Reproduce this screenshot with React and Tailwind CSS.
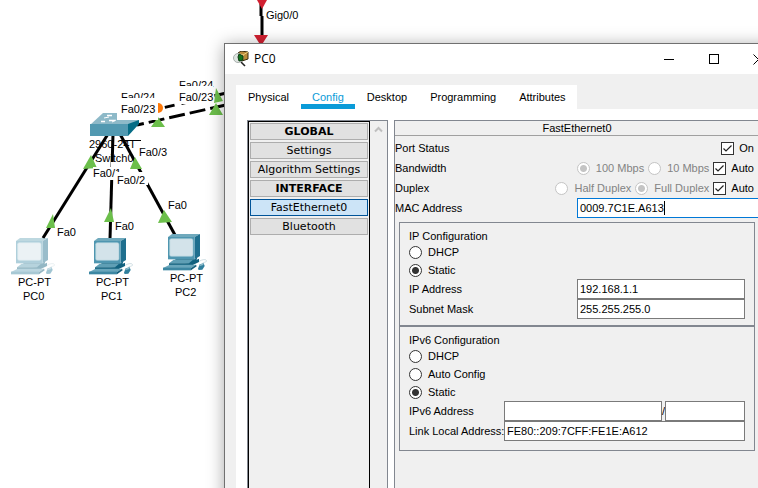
import { useId } from "react";

const NODE_LABELS = [
  { x: 18, y: 286, text: "PC-PT" },
  { x: 23, y: 300, text: "PC0" },
  { x: 96, y: 286, text: "PC-PT" },
  { x: 101, y: 300, text: "PC1" },
  { x: 170, y: 282, text: "PC-PT" },
  { x: 175, y: 296, text: "PC2" },
  { x: 57, y: 236, text: "Fa0" },
  { x: 115, y: 230, text: "Fa0" },
  { x: 168, y: 209, text: "Fa0" },
  { x: 139, y: 156, text: "Fa0/3" },
  { x: 266, y: 19, text: "Gig0/0" },
];

function Computer({ x, y, faded }) {
  return (
    <svg x={x} y={y} width="44" height="37" viewBox="0 0 132 111" opacity={faded ? 0.45 : 1}>
      <polygon points="15,9 27,0 111,0 95,9" fill="#6fa9bc" />
      <polygon points="95,9 111,0 111,66 95,76" fill="#1f6f8e" />
      <rect x="15" y="9" width="80" height="67" fill="#4f96b0" />
      <rect x="20" y="14" width="70" height="53" rx="5" fill="#d3e3ea" stroke="#a5cad6" strokeWidth="2" />
      <polygon points="37,76 95,76 103,70 100,81 86,89 37,84" fill="#136583" />
      <polygon points="18,88 32,77 90,77 78,88" fill="#5f9fb5" />
      <polygon points="18,88 78,88 108,74 108,84 88,94 18,94" fill="#12617e" />
      <polygon points="0,102 20,92 99,92 84,102" fill="#69a6bb" />
      <polygon points="0,101 84,101 84,109 0,109" fill="#3d87a2" />
      <polygon points="84,102 99,92 101,97 84,109" fill="#155f7b" />
      <path d="M108 82 C122 74 132 76 130 82 C129 86 120 84 118 88" fill="none" stroke="#b9ced7" strokeWidth="2" />
      <path d="M105 104 L110 91 L122 88 L125 96 L118 107 L107 108 Z" fill="#2f7f9d" />
      <path d="M108 97 L112 91 L122 88 L121 93 Z" fill="#8fbccb" />
    </svg>
  );
}

function Topology() {
  return (
    <svg
      className="absolute left-0 top-0 font-['Liberation_Sans',Arial,sans-serif] text-[11px]"
      width="758"
      height="488"
      viewBox="0 0 758 488"
      role="img"
      aria-label="Network topology"
    >
      <g fill="#000">
        <text x="89" y="148">2960-24T</text>
        <text x="95" y="162">Switch0</text>
      </g>
      <g stroke="#000" strokeWidth="3" fill="none">
        <path d="M108 134 L43 238" />
        <path d="M113 134 L110 239" />
        <path d="M120 134 L175 235" />
        <path d="M261 4 V16 M262 16 V38" />
        <path d="M137 125 L226 105" strokeDasharray="16 5" strokeDashoffset="9" />
        <path d="M158 109 L226 93" strokeDasharray="10 7" strokeDashoffset="10" />
        <path d="M120 140.500 H141" strokeWidth="1" />
      </g>
      <circle cx="158" cy="108" r="5" fill="#ff7a0a" />
      <g fill="#6cbf4b">
        <polygon points="158,117 165,127 151,127" />
        <polygon points="216,88 223,101 214,103" />
        <polygon points="216,103 223,115 209,115" />
        <polygon points="91,155 97,168 83,169" />
        <polygon points="135,157 142,169 130,169" />
        <polygon points="53,214 55,228 46,228" />
        <polygon points="111,208 114,222 104,222" />
        <polygon points="164,210 172,222 158,223" />
      </g>
      <polygon points="257,0 267,0 262,9" fill="#d12031" />
      <polygon points="254,35 268,35 261,46" fill="#d12031" />

      <polygon points="90,125 103,113 139,113 139,121 128,125" fill="#8db9c8" />
      <polygon points="90,124 128,124 128,136 90,136" fill="#5299b1" />
      <polygon points="128,124 139,120 139,124 128,136" fill="#066d86" />
      <g stroke="#fff" strokeWidth="1.500" fill="none">
        <path d="M107 115.500 h5 M101 121.500 h4 M109 120.500 h6" />
        <path d="M104 118 l5 -1 M112 122 l4 -2" strokeWidth="1" />
      </g>

      <g fill="#fff">
        <rect x="177" y="80" width="36" height="11" />
        <rect x="119" y="92" width="36" height="10" />
      </g>
      <text x="179" y="89">Fa0/24</text>
      <text x="121" y="101">Fa0/24</text>
      <g fill="#fff">
        <rect x="177" y="86" width="36" height="18" />
        <rect x="117" y="98" width="41" height="22" />
        <rect x="93" y="167" width="22" height="13" />
      </g>
      <text x="179" y="101">Fa0/23</text>
      <text x="121" y="113">Fa0/23</text>
      <text x="93" y="177">Fa0/1</text>
      <rect x="111" y="162" width="4" height="5" fill="#fff" />
      <rect x="115" y="172" width="33" height="13" fill="#fff" />
      <text x="117" y="184">Fa0/2</text>

      <Computer x={11} y={238} faded />
      <Computer x={89} y={238} />
      <Computer x={163} y={234} />
      {NODE_LABELS.map((l) => (
        <text key={`${l.x}-${l.y}`} x={l.x} y={l.y}>
          {l.text}
        </text>
      ))}
    </svg>
  );
}

function Radio({ name, label, checked, disabled }) {
  return (
    <label className={`flex items-center gap-[6px] ${disabled ? "text-[#838383]" : "text-black"}`}>
      <input
        type="radio"
        name={name}
        defaultChecked={checked}
        disabled={disabled}
        className="size-[13px] appearance-none rounded-full border border-[#333] bg-white checked:bg-[radial-gradient(circle,#333_0_3px,#fff_4px)] disabled:border-[#c4c4c4] disabled:checked:bg-[radial-gradient(circle,#c4c4c4_0_3px,#fff_4px)]"
      />
      {label}
    </label>
  );
}

function CheckBox({ label }) {
  return (
    <label className="flex items-center gap-[5px]">
      <span className="grid">
        <input
          type="checkbox"
          defaultChecked
          className="col-start-1 row-start-1 size-[13px] appearance-none border border-[#333] bg-white"
        />
        <svg className="pointer-events-none col-start-1 row-start-1" width="13" height="13" viewBox="0 0 13 13" fill="none" stroke="#222" strokeWidth="1.200">
          <path d="M2.500 6.500 L5 9 L10.500 3.500" />
        </svg>
      </span>
      {label}
    </label>
  );
}

const field = "h-5 min-w-0 border border-[#7a7a7a] bg-white px-[2px] outline-none";

function TextRow({ label, value, wide }) {
  const id = useId();
  return (
    <div className="flex h-5 items-center">
      <label htmlFor={id} className={wide ? "w-[95px] shrink-0 whitespace-nowrap" : "w-[168px] shrink-0"}>
        {label}
      </label>
      <input id={id} defaultValue={value} className={`${field} flex-1`} />
    </div>
  );
}

const TABS = ["Physical", "Config", "Desktop", "Programming", "Attributes"];
const MENU = [
  { text: "GLOBAL", heading: true },
  { text: "Settings" },
  { text: "Algorithm Settings" },
  { text: "INTERFACE", heading: true },
  { text: "FastEthernet0", active: true },
  { text: "Bluetooth" },
];

function TitleBar() {
  return (
    <header className="flex h-[30px] items-center bg-white pl-2 pr-px">
      <svg width="16" height="16" viewBox="0 0 16 16" aria-hidden="true">
        <polygon points="5,2 8,0 15,1 15,8 9,10 5,8" fill="#b98a3c" stroke="#3a2d10" />
        <path d="M6 3 L10 4 L15 1 M10 4 V9" stroke="#f1d27c" fill="none" />
        <circle cx="5" cy="7" r="4.500" fill="#dfe5e2" stroke="#a9b0ad" />
        <path d="M6 3 L10 5 V9 L6 10 L5 6 Z" fill="#14751f" stroke="#0b3a10" />
        <path d="M8 11 L12 15" stroke="#222" strokeWidth="1.600" />
      </svg>
      <h1 className="ml-[5px] flex-1 font-['Open_Sans','Noto_Sans',sans-serif] text-[12px]">PC0</h1>
      <button aria-label="Minimize" className="flex h-full w-[45px] items-center justify-center">
        <span className="h-px w-[10px] bg-black" />
      </button>
      <button aria-label="Maximize" className="flex h-full w-[45px] items-center justify-center">
        <span className="size-[10px] border border-black" />
      </button>
      <button aria-label="Close" className="flex h-full w-[45px] items-center justify-center">
        <svg width="11" height="11" viewBox="0 0 11 11" stroke="#000">
          <path d="M0.500 0.500 L10.500 10.500 M10.500 0.500 L0.500 10.500" />
        </svg>
      </button>
    </header>
  );
}

function Sidebar() {
  return (
    <aside className="flex w-[141px] shrink-0 border border-[#828790] bg-[#f0f0f0]">
      <nav className="flex flex-1 flex-col gap-[2px] border border-black p-px font-['DejaVu_Sans',Verdana,sans-serif] text-[11px]">
        {MENU.map((m) => (
          <button
            key={m.text}
            className={`h-[17px] whitespace-nowrap border pt-px leading-[14px] ${m.heading ? "font-bold" : ""} ${
              m.active ? "border-[#005499] bg-[#cce4f7]" : "border-[#adadad] bg-[#e1e1e1]"
            }`}
          >
            {m.text}
          </button>
        ))}
      </nav>
      <div className="flex w-[17px] justify-center pt-[5px]">
        <svg width="9" height="7" viewBox="0 0 9 7" fill="none" stroke="#bfbfbf" strokeWidth="2">
          <path d="M1 5.500 L4.500 2 L8 5.500" />
        </svg>
      </div>
    </aside>
  );
}

function InterfacePanel() {
  return (
    <section className="min-w-0 flex-1 border border-[#828790] bg-[#f0f0f0]">
      <h2 className="h-[15px] border-b border-[#a0a0a0] text-center leading-[14px]">FastEthernet0</h2>
      <div className="pt-[2px]">
        <div className="flex h-5 items-center justify-between pr-[5px]">
          <span>Port Status</span>
          <CheckBox label="On" />
        </div>
        <div className="flex h-5 items-center gap-1 pr-[5px]">
          <span className="flex-1">Bandwidth</span>
          <Radio name="bandwidth" label="100 Mbps" checked disabled />
          <Radio name="bandwidth" label="10 Mbps" disabled />
          <CheckBox label="Auto" />
        </div>
        <div className="flex h-5 items-center gap-1 pr-[5px]">
          <span className="flex-1">Duplex</span>
          <Radio name="duplex" label="Half Duplex" disabled />
          <Radio name="duplex" label="Full Duplex" checked disabled />
          <CheckBox label="Auto" />
        </div>
        <div className="flex h-5 items-center">
          <label htmlFor="mac" className="w-[182px] shrink-0">
            MAC Address
          </label>
          <div className="relative flex min-w-0 flex-1">
            <input id="mac" defaultValue="0009.7C1E.A613" className="h-5 min-w-0 flex-1 border border-[#0078d7] bg-white px-[2px] outline-none" />
            <span className="absolute left-[87px] top-[3px] h-[14px] w-px bg-black" />
          </div>
        </div>
      </div>
      <div className="mx-1 mt-1">
        <div role="group" aria-label="IP Configuration" className="border border-[#828790] px-[9px] pb-[6px] pt-[5px]">
          <h3 className="h-[15px] leading-[16px]">IP Configuration</h3>
          <div className="grid auto-rows-[18px]">
            <Radio name="ip" label="DHCP" />
            <Radio name="ip" label="Static" checked />
          </div>
          <TextRow label="IP Address" value="192.168.1.1" />
          <TextRow label="Subnet Mask" value="255.255.255.0" />
        </div>
        <div role="group" aria-label="IPv6 Configuration" className="border border-[#828790] px-[9px] pb-[9px] pt-[5px]">
          <h3 className="h-[15px] leading-[16px]">IPv6 Configuration</h3>
          <div className="grid auto-rows-[18px]">
            <Radio name="ipv6" label="DHCP" />
            <Radio name="ipv6" label="Auto Config" />
            <Radio name="ipv6" label="Static" checked />
          </div>
          <div className="flex h-5 items-center">
            <label htmlFor="ipv6-address" className="w-[95px] shrink-0">
              IPv6 Address
            </label>
            <input id="ipv6-address" className={`${field} flex-1`} />
            <span>/</span>
            <input aria-label="Prefix length" className={`${field} w-20`} />
          </div>
          <TextRow label="Link Local Address:" value="FE80::209:7CFF:FE1E:A612" wide />
        </div>
      </div>
    </section>
  );
}

export default function App() {
  return (
    <main className="relative h-screen overflow-hidden bg-white font-['Liberation_Sans',Arial,sans-serif] text-[11px] text-black">
      <Topology />
      <div className="absolute -bottom-8 -right-[25px] left-[224px] top-[43px] flex flex-col border border-[#707070] bg-[#f0f0f0] shadow-[0_2px_16px_rgba(0,0,0,0.35)]">
        <TitleBar />
        <div className="mx-[11px] mt-[11px] flex">
          <div role="tablist" className="flex h-6 gap-px bg-white pl-px">
            {TABS.map((t) => (
              <button
                key={t}
                role="tab"
                aria-selected={t === "Config"}
                className={`border-b-[5px] px-[11px] pt-[5px] leading-[14px] ${
                  t === "Config" ? "border-[#0a9bd8] text-[#0a9bd8]" : "border-transparent"
                }`}
              >
                {t}
              </button>
            ))}
          </div>
        </div>
        <div className="mx-[11px] flex flex-1 gap-[6px] bg-white px-[11px] pt-[11px]">
          <Sidebar />
          <InterfacePanel />
        </div>
      </div>
    </main>
  );
}
